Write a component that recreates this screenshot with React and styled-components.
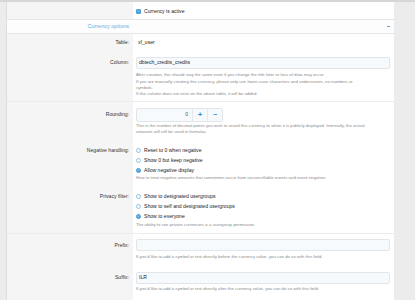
import React from 'react';
import styled, { createGlobalStyle } from 'styled-components';

const Global = createGlobalStyle`
  html, body { margin: 0; padding: 0; }
  body { background: #ececec; font-family: "Liberation Sans", Arial, sans-serif; }
`;

const Page = styled.div`
  width: 415px;
  height: 300px;
  overflow: hidden;
  box-sizing: border-box;
  background: #ececec;
  border-top: 2px solid #d6d6d6;
  display: flex;
  padding-left: 6px;
`;

const Panel = styled.div`
  width: 387px;
  background: #fff;
  border-left: 1px solid #dddddd;
  display: flex;
  flex-direction: column;
`;

const Row = styled.div`
  display: grid;
  grid-template-columns: 126px 1fr;
  border-bottom: ${p => (p.$sep ? '1px solid #ececec' : 'none')};
`;

const Label = styled.div`
  background: #f5f5f5;
  text-align: right;
  padding: ${p => p.$top || 0}px 4px 0 0;
  font-size: 5.1px;
  line-height: 7px;
  color: #333;
`;

const Content = styled.div`
  padding: ${p => p.$top || 0}px 4px ${p => p.$bottom || 0}px 3px;
  display: flex;
  flex-direction: column;
  font-size: 5.1px;
  line-height: 7px;
  color: #222;
`;

const Header = styled.div`
  display: grid;
  grid-template-columns: 126px 1fr;
  height: 13px;
  border-top: 1px solid #e6e6e6;
  border-bottom: 1px solid #e6e6e6;
  background: #fdfdfd;
  align-items: center;
`;

const HeaderTitle = styled.div`
  text-align: right;
  padding-right: 4px;
  font-size: 5.5px;
  color: #6aaedd;
`;

const HeaderTools = styled.div`
  display: flex;
  justify-content: flex-end;
  padding-right: 4px;
`;

const Collapse = styled.span`
  width: 3px;
  height: 1.5px;
  background: #4a9fd8;
  border-radius: 0.5px;
`;

const Value = styled.div`
  padding-left: 2px;
  color: #222;
`;

const Input = styled.div`
  height: ${p => p.$h || 12}px;
  box-sizing: border-box;
  border: 1px solid #e1e6eb;
  border-radius: 2px;
  background: #f7fafd;
  padding-left: 2px;
  display: flex;
  align-items: center;
  color: #222;
`;

const Explain = styled.div`
  margin-top: ${p => p.$mt || 0}px;
  font-size: 4.3px;
  line-height: 6.3px;
  color: #8a8a8a;
`;

const Spinner = styled.div`
  width: 87px;
  height: 14px;
  box-sizing: border-box;
  border: 1px solid #e1e6eb;
  border-radius: 2px;
  background: #f7fafd;
  display: flex;
  align-items: stretch;
`;

const SpinValue = styled.div`
  flex: 1;
  display: flex;
  align-items: center;
  justify-content: flex-end;
  padding-right: 4px;
  color: #555;
`;

const SpinButton = styled.div`
  width: 14px;
  display: flex;
  align-items: center;
  justify-content: center;
  border-left: 1px solid #e4e9ee;
  color: #2f86c9;
  font-size: 7px;
  font-weight: bold;
`;

const Options = styled.div`
  display: flex;
  flex-direction: column;
`;

const Option = styled.div`
  height: 9.8px;
  display: flex;
  align-items: center;
  gap: 3px;
  color: #222;
`;

const Check = styled.span`
  width: 5px;
  height: 5px;
  box-sizing: border-box;
  border-radius: ${p => (p.$round ? '50%' : '1px')};
  border: 0.8px solid ${p => (p.$on ? '#4a9fd8' : '#8cc2e6')};
  background: ${p => (p.$on ? '#4a9fd8' : '#fff')};
  display: inline-flex;
  align-items: center;
  justify-content: center;
  flex: none;
`;

const CheckMark = () => (
  <svg width="4" height="4" viewBox="0 0 10 10">
    <path d="M2 5.2 L4.2 7.3 L8.2 2.8" fill="none" stroke="#fff" strokeWidth="1.8" />
  </svg>
);

const Box = ({ on, round }) => (
  <Check $on={on} $round={round}>{on && <CheckMark />}</Check>
);

export default function App() {
  return (
    <>
      <Global />
      <Page>
        <Panel>
          <Row>
            <Label />
            <Content $top={5.5} $bottom={4.5}>
              <Option style={{ height: 7 }}>
                <Box on />
                <span>Currency is active</span>
              </Option>
            </Content>
          </Row>

          <Header>
            <HeaderTitle>Currency options</HeaderTitle>
            <HeaderTools><Collapse /></HeaderTools>
          </Header>

          <Row>
            <Label $top={5}>Table:</Label>
            <Content $top={5} $bottom={5}>
              <Value>xf_user</Value>
            </Content>
          </Row>

          <Row $sep>
            <Label $top={8.5}>Column:</Label>
            <Content $top={6} $bottom={3.45}>
              <Input>dbtech_credits_credits</Input>
              <Explain $mt={3.35}>
                After creation, this should stay the same even if you change the title later or loss of data may occur.<br />
                If you are manually creating this currency, please only use lower-case characters and underscores, no numbers or<br />
                symbols.<br />
                If this column does not exist on the above table, it will be added.
              </Explain>
            </Content>
          </Row>

          <Row>
            <Label $top={9.5}>Rounding:</Label>
            <Content $top={6} $bottom={5}>
              <Spinner>
                <SpinValue>0</SpinValue>
                <SpinButton>+</SpinButton>
                <SpinButton>−</SpinButton>
              </Spinner>
              <Explain $mt={0.85}>
                This is the number of decimal points you wish to round this currency to when it is publicly displayed. Internally, the actual<br />
                amounts will still be used in formulas.
              </Explain>
            </Content>
          </Row>

          <Row>
            <Label $top={7.05}>Negative handling:</Label>
            <Content $top={5.65} $bottom={5}>
              <Options>
                <Option><Box round /><span>Reset to 0 when negative</span></Option>
                <Option><Box round /><span>Show 0 but keep negative</span></Option>
                <Option><Box round on /><span>Allow negative display</span></Option>
              </Options>
              <Explain>How to treat negative amounts that sometimes occur from uncancellable events and event negation.</Explain>
            </Content>
          </Row>

          <Row $sep>
            <Label $top={6.4}>Privacy filter:</Label>
            <Content $top={5} $bottom={4.2}>
              <Options>
                <Option><Box round /><span>Show to designated usergroups</span></Option>
                <Option><Box round /><span>Show to self and designated usergroups</span></Option>
                <Option><Box round on /><span>Show to everyone</span></Option>
              </Options>
              <Explain $mt={1.3}>The ability to see private currencies is a usergroup permission.</Explain>
            </Content>
          </Row>

          <Row>
            <Label $top={7.8}>Prefix:</Label>
            <Content $top={5.3} $bottom={5.5}>
              <Input />
              <Explain $mt={2.9}>If you'd like to add a symbol or text directly before the currency value, you can do so with this field.</Explain>
            </Content>
          </Row>

          <Row>
            <Label $top={8.2}>Suffix:</Label>
            <Content $top={5.7} $bottom={8}>
              <Input>ILR</Input>
              <Explain $mt={2.2}>If you'd like to add a symbol or text directly after the currency value, you can do so with this field.</Explain>
            </Content>
          </Row>
        </Panel>
      </Page>
    </>
  );
}
